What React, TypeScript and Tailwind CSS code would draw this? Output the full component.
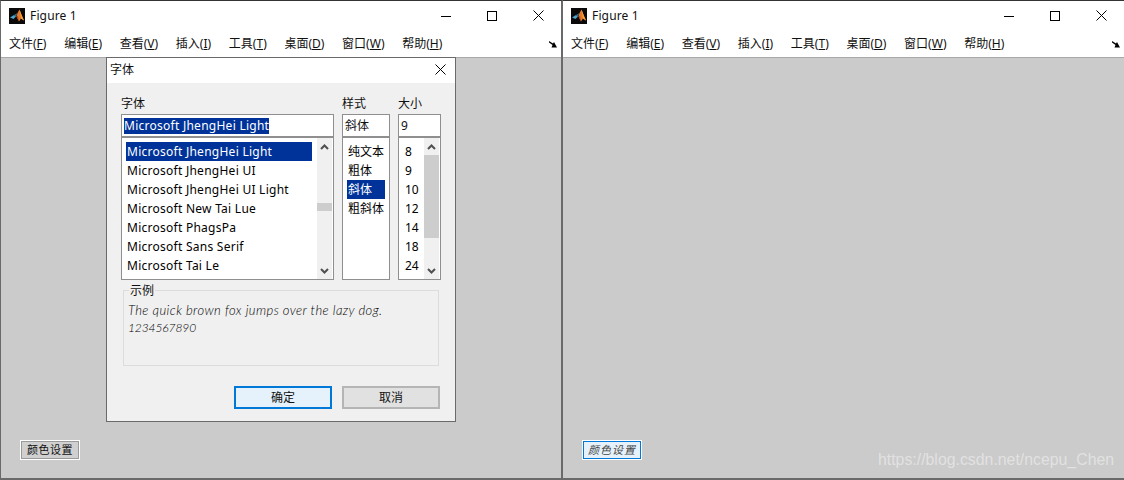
import React from "react";

const CJK = "font-['Noto_Sans','Noto_Sans_CJK_SC',sans-serif]";
const menus = [
  ["文件(", "F", ")"],
  ["编辑(", "E", ")"],
  ["查看(", "V", ")"],
  ["插入(", "I", ")"],
  ["工具(", "T", ")"],
  ["桌面(", "D", ")"],
  ["窗口(", "W", ")"],
  ["帮助(", "H", ")"],
];

function Logo() {
  return (
    <svg width="16" height="16" viewBox="0 0 16 16" className="shrink-0">
      <rect width="16" height="16" fill="#0a0a0a" />
      <path d="M1 9.5 L5 7 L7 8.5 L4.5 11 Z" fill="#4fa3c7" />
      <path d="M5 7 L7 8.5 L8.5 5 Z" fill="#2d6f95" />
      <path d="M8.5 5 L10.5 1.5 L13 8 L15 12.5 L12 10.5 L10 13.5 L7.5 8.5 Z" fill="#e8792a" />
      <path d="M10.5 1.5 L13 8 L15 12.5 L12 10.5 Z" fill="#f3a73a" />
      <path d="M7.5 8.5 L10 13.5 L9 8 Z" fill="#b8431c" />
    </svg>
  );
}

function WindowButtons() {
  return (
    <div className="flex items-center">
      <div className="flex w-[46px] justify-center">
        <svg width="10" height="10" viewBox="0 0 10 10"><path d="M0 5.5H10" stroke="#000" strokeWidth="1" /></svg>
      </div>
      <div className="flex w-[46px] justify-center">
        <svg width="10" height="10" viewBox="0 0 10 10"><rect x="0.5" y="0.5" width="9" height="9" fill="none" stroke="#000" /></svg>
      </div>
      <div className="flex w-[46px] justify-center">
        <svg width="11" height="11" viewBox="0 0 11 11"><path d="M0.5 0.5L10.5 10.5M10.5 0.5L0.5 10.5" stroke="#000" strokeWidth="1" /></svg>
      </div>
    </div>
  );
}

function Chevron({ down }: { down?: boolean }) {
  return (
    <svg width="9" height="6" viewBox="0 0 9 6">
      <path d={down ? "M1 1L4.5 4.5L8 1" : "M1 5L4.5 1.5L8 5"} fill="none" stroke="#505050" strokeWidth="2" />
    </svg>
  );
}

function Scrollbar({ before, thumb }: { before: number; thumb: number }) {
  return (
    <div className="flex w-[15px] shrink-0 flex-col bg-[#f0f0f0]">
      <div className="flex h-[17px] shrink-0 items-center justify-center"><Chevron /></div>
      <div className="flex-1">
        <div style={{ height: before }} />
        <div className="bg-[#cdcdcd]" style={{ height: thumb }} />
      </div>
      <div className="flex h-[17px] shrink-0 items-center justify-center"><Chevron down /></div>
    </div>
  );
}

function Row({ text, selected, wide }: { text: string; selected?: boolean; wide?: boolean }) {
  return (
    <div className={`h-[19px] pl-px text-[12px] leading-[19px] whitespace-nowrap ${wide ? "tracking-[0.26px]" : ""} ${selected ? "bg-[#003399] text-white" : "text-black"}`}>
      {text}
    </div>
  );
}

function Figure({ className, button }: { className: string; button: React.ReactNode }) {
  return (
    <div className={`flex h-full flex-col ${className}`}>
      <div className="flex h-[29px] shrink-0 items-center justify-between bg-white pl-[8px]">
        <div className="flex items-center gap-[5px]">
          <Logo />
          <span className="text-[12px] tracking-[0.15px] text-[#111]">Figure 1</span>
        </div>
        <WindowButtons />
      </div>
      <div className="flex h-[27px] shrink-0 items-start justify-between bg-white pl-[8px] pr-[4px] pt-[5px]">
        <div className="flex gap-[17.7px] text-[12px] text-[#111]">
          {menus.map(([a, b, c]) => (
            <span key={a} className="whitespace-nowrap">
              {a}<span className="underline">{b}</span>{c}
            </span>
          ))}
        </div>
        <svg width="8" height="8" viewBox="0 0 8 8" className="mt-[5px]">
          <path d="M0 1L4 3.5L5 2L8 7.5H2.5L3.5 5L0 2.5Z" fill="#000" />
        </svg>
      </div>
      <div className="h-px shrink-0 bg-[#a8a8a8]" />
      <div className="flex flex-1 flex-col justify-end bg-[#cbcbcb] pb-[18px] pl-[19px]">{button}</div>
    </div>
  );
}

function Dialog() {
  return (
    <div className={`absolute left-[106px] top-[57px] flex h-[365px] w-[350px] flex-col border border-[#6a6a6a] bg-[#f0f0f0] ${CJK}`}>
      <div className="flex h-[25px] shrink-0 items-start justify-between bg-white pl-[3px] pr-[9px] pt-[3px] text-[12px] text-[#111]">
        <span>字体</span>
        <svg width="11" height="11" viewBox="0 0 11 11" className="mt-[3px]"><path d="M0.5 0.5L10.5 10.5M10.5 0.5L0.5 10.5" stroke="#000" strokeWidth="1" /></svg>
      </div>
      <div className="flex flex-1 flex-col px-[14px]">
        <div className="mt-[6px] flex gap-[8px]">
          <div className="flex w-[213px] flex-col">
            <div className="h-[25px] text-[12px] leading-[29px] text-[#111]">字体</div>
            <div className="flex h-[23px] items-center border border-[#8f8f8f] bg-white pl-[2px]">
              <span className="bg-[#003399] text-[12px] leading-[16px] tracking-[0.26px] text-white">Microsoft JhengHei Light</span>
            </div>
            <div className="flex h-[143px] justify-between border border-[#8f8f8f] bg-white pt-[4px] pl-[4px]">
              <div className="w-[186px]">
                <Row wide selected text="Microsoft JhengHei Light" />
                <Row wide text="Microsoft JhengHei UI" />
                <Row wide text="Microsoft JhengHei UI Light" />
                <Row wide text="Microsoft New Tai Lue" />
                <Row wide text="Microsoft PhagsPa" />
                <Row wide text="Microsoft Sans Serif" />
                <Row wide text="Microsoft Tai Le" />
              </div>
              <div className="-mt-[4px] mr-px flex">
                <Scrollbar before={48} thumb={8} />
              </div>
            </div>
          </div>
          <div className="flex w-[48px] flex-col">
            <div className="h-[25px] text-[12px] leading-[29px] text-[#111]">样式</div>
            <div className="flex h-[23px] items-center border border-[#8f8f8f] bg-white pl-[2px] text-[12px] text-[#111]">斜体</div>
            <div className="h-[143px] border border-[#8f8f8f] bg-white px-[4px] pt-[4px]">
              <Row text="纯文本" />
              <Row text="粗体" />
              <Row selected text="斜体" />
              <Row text="粗斜体" />
            </div>
          </div>
          <div className="flex w-[43px] flex-col">
            <div className="h-[25px] text-[12px] leading-[29px] text-[#111]">大小</div>
            <div className="flex h-[23px] items-center border border-[#8f8f8f] bg-white pl-[2px] text-[12px] text-[#111]">9</div>
            <div className="flex h-[143px] justify-between border border-[#8f8f8f] bg-white pl-[5px]">
              <div className="w-[16px] pt-[4px]">
                {["8", "9", "10", "12", "14", "18", "24"].map((t) => <Row key={t} text={t} />)}
              </div>
              <div className="mr-px flex">
                <Scrollbar before={0} thumb={83} />
              </div>
            </div>
          </div>
        </div>
        <div className="relative ml-[2px] mt-[10px] h-[76px] w-[316px] border border-[#dcdcdc] pl-[4px] pt-[11px]">
          <span className="absolute -top-[8px] left-[5px] bg-[#f0f0f0] px-px text-[12px] leading-[16px] text-[#111]">示例</span>
          <div className="italic text-black font-['Lato',sans-serif] font-light">
            <div className="text-[13px] leading-[17px] tracking-[0.42px]">The quick brown fox jumps over the lazy dog.</div>
            <div className="text-[12px] leading-[17px] -tracking-[0.1px]">1234567890</div>
          </div>
        </div>
        <div className="mr-[1px] mt-[20px] flex justify-end gap-[10px]">
          <button className="h-[23px] w-[98px] border-2 border-[#0078d7] bg-[#e5f1fb] text-[12px] text-[#111]">确定</button>
          <button className="h-[23px] w-[98px] border-2 border-[#b5b5b5] bg-[#e1e1e1] text-[12px] text-[#111]">取消</button>
        </div>
      </div>
    </div>
  );
}

export default function App() {
  return (
    <div className={`relative flex h-[480px] w-[1124px] overflow-hidden bg-[#cbcbcb] ${CJK}`}>
      <Figure
        className="w-[563px] border-b-2 border-l border-r-2 border-t border-[#6a6a6a] border-t-[#333]"
        button={
          <button className="h-[20px] w-[60px] border border-white bg-[#d0d0d0] text-[11px] tracking-[0.5px] text-[#111] outline outline-[#9a9a9a] -outline-offset-2">颜色设置</button>
        }
      />
      <Figure
        className="w-[561px] border-b-2 border-t border-[#6a6a6a] border-t-[#333]"
        button={
          <div>
            <button className="h-[20px] w-[60px] border border-white bg-[#e5f1fb] text-[11px] italic tracking-[1px] text-[#444] outline outline-[#0078d7] -outline-offset-2">颜色设置</button>
          </div>
        }
      />
      <Dialog />
      <span className="pointer-events-none absolute left-[878px] top-[450px] whitespace-nowrap text-[15.85px] leading-[19px] text-white/45 font-['Liberation_Sans',sans-serif]">https://blog.csdn.net/ncepu_Chen</span>
    </div>
  );
}
